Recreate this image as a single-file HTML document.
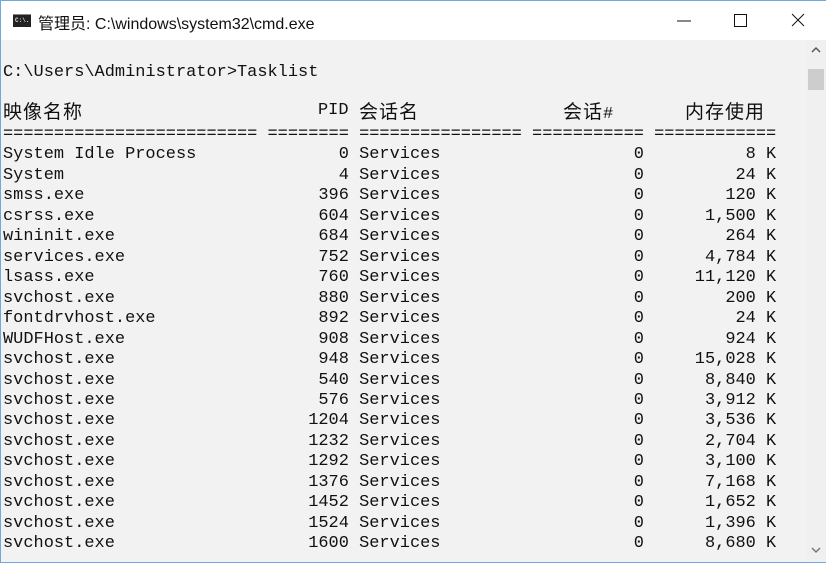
<!DOCTYPE html>
<html><head><meta charset="utf-8"><style>
html,body{margin:0;padding:0;width:827px;height:563px;overflow:hidden;background:#fff}
#win{position:absolute;left:0;top:0;width:825px;height:561px;border:1px solid #6fa8dc;border-right:none;background:#fff}
#title{position:absolute;left:0;top:0;width:826px;height:39px;background:#fff}
#title .t{position:absolute;left:37px;top:9px;font:16px "Liberation Sans","Noto Sans CJK SC",sans-serif;color:#111}
#icon{position:absolute;left:12px;top:13px;width:18px;height:12px;background:#222;border-top:1px solid #888}
#icon span{position:absolute;left:2px;top:2px;font:bold 6px "Liberation Mono",monospace;color:#ddd}
#con{position:absolute;left:0;top:39px;width:805px;height:522px;background:#f2f2f2}
#sb{position:absolute;left:805px;top:39px;width:20px;height:522px;background:#f0f0f0}
#thumb{position:absolute;left:2px;top:29px;width:16px;height:21px;background:#cdcdcd}
pre{position:absolute;left:2px;top:42px;margin:0;font:16.97px "Liberation Mono","Noto Sans CJK SC",monospace;line-height:20.47px;color:#111;white-space:pre}
.h{position:absolute;top:99px;font:16.97px "Liberation Mono","Noto Sans CJK SC",monospace;color:#111;line-height:22px}
.cj{font-family:"Noto Sans CJK SC",sans-serif;font-size:19px;letter-spacing:1px}
</style></head><body>
<div id="win">
<div id="title"><div id="icon"><span>C:\.</span></div><div class="t">管理员: C:\windows\system32\cmd.exe</div>
<svg style="position:absolute;left:670px;top:10px" width="150" height="20">
<line x1="6" y1="10" x2="20" y2="10" stroke="#111" stroke-width="1"/>
<rect x="63.5" y="3.5" width="12" height="12" fill="none" stroke="#111"/>
<line x1="121" y1="3" x2="133" y2="15" stroke="#111"/><line x1="133" y1="3" x2="121" y2="15" stroke="#111"/>
</svg></div>
<div id="con"></div>
<div id="sb"><div id="thumb"></div>
<svg style="position:absolute;left:4px;top:6px" width="12" height="8"><polyline points="2,6 6,2 10,6" fill="none" stroke="#555" stroke-width="1.5"/></svg>
<svg style="position:absolute;left:4px;top:506px" width="12" height="8"><polyline points="2,2 6,6 10,2" fill="none" stroke="#777" stroke-width="1.5"/></svg>
</div>
<pre>

C:\Users\Administrator&gt;Tasklist


========================= ======== ================ =========== ============
System Idle Process              0 Services                   0          8 K
System                           4 Services                   0         24 K
smss.exe                       396 Services                   0        120 K
csrss.exe                      604 Services                   0      1,500 K
wininit.exe                    684 Services                   0        264 K
services.exe                   752 Services                   0      4,784 K
lsass.exe                      760 Services                   0     11,120 K
svchost.exe                    880 Services                   0        200 K
fontdrvhost.exe                892 Services                   0         24 K
WUDFHost.exe                   908 Services                   0        924 K
svchost.exe                    948 Services                   0     15,028 K
svchost.exe                    540 Services                   0      8,840 K
svchost.exe                    576 Services                   0      3,912 K
svchost.exe                   1204 Services                   0      3,536 K
svchost.exe                   1232 Services                   0      2,704 K
svchost.exe                   1292 Services                   0      3,100 K
svchost.exe                   1376 Services                   0      7,168 K
svchost.exe                   1452 Services                   0      1,652 K
svchost.exe                   1524 Services                   0      1,396 K
svchost.exe                   1600 Services                   0      8,680 K</pre>
<div class="h cj" style="left:2px">映像名称</div>
<div class="h" style="left:317px">PID</div>
<div class="h cj" style="left:358px">会话名</div>
<div class="h" style="left:562px"><span class="cj">会话</span>#</div>
<div class="h cj" style="left:684px">内存使用</div>
</div>
</body></html>
